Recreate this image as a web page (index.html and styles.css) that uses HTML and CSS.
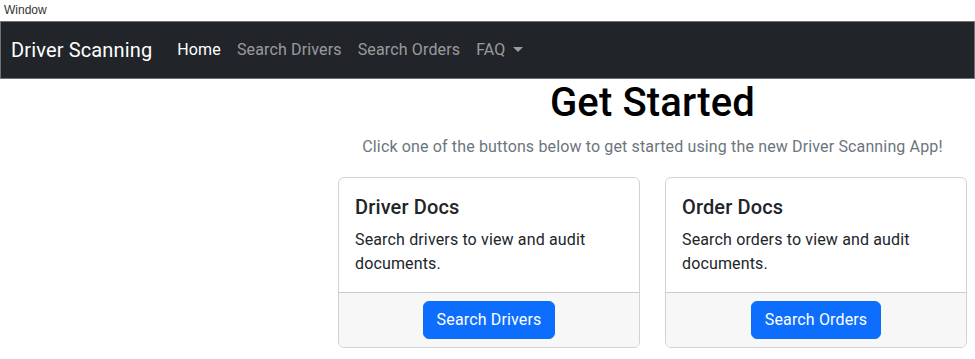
FILE: index.html
```html
<!DOCTYPE html>
<html lang="en">
<head>
<meta charset="utf-8">
<title>Driver Scanning</title>
<link rel="stylesheet" href="styles.css">
</head>
<body>
<div class="window-bar">Window</div>
<nav class="navbar">
  <a class="brand" href="#">Driver Scanning</a>
  <ul class="nav">
    <li><a class="nav-link active" href="#">Home</a></li>
    <li><a class="nav-link" href="#">Search Drivers</a></li>
    <li><a class="nav-link" href="#">Search Orders</a></li>
    <li><a class="nav-link dropdown" href="#">FAQ<span class="caret"></span></a></li>
  </ul>
</nav>
<main class="main">
  <div class="spacer"></div>
  <section class="content">
    <h1 class="title">Get Started</h1>
    <p class="lead">Click one of the buttons below to get started using the new Driver Scanning App!</p>
    <div class="cards">
      <div class="card">
        <div class="card-body">
          <h5 class="card-title">Driver Docs</h5>
          <p class="card-text">Search drivers to view and audit documents.</p>
        </div>
        <div class="card-footer"><a class="btn" href="#">Search Drivers</a></div>
      </div>
      <div class="card">
        <div class="card-body">
          <h5 class="card-title">Order Docs</h5>
          <p class="card-text">Search orders to view and audit documents.</p>
        </div>
        <div class="card-footer"><a class="btn" href="#">Search Orders</a></div>
      </div>
    </div>
  </section>
</main>
</body>
</html>
```
FILE: styles.css
```css
* { box-sizing: border-box; }
html, body { margin: 0; padding: 0; }
body {
  font-family: Roboto, "Liberation Sans", sans-serif;
  font-size: 16px;
  line-height: 1.5;
  letter-spacing: 0.009em;
  color: #212529;
  background: #fff;
}
.window-bar {
  height: 21px;
  padding-left: 4px;
  font-family: "Liberation Sans", Arial, sans-serif;
  font-size: 12px;
  line-height: 21px;
  letter-spacing: 0;
  color: #333;
}
.navbar {
  display: flex;
  align-items: center;
  background: #212529;
  border: 1px solid #6f7275;
  padding: 8px 10px;
  height: 58px;
}
.brand {
  font-size: 20px;
  line-height: 30px;
  padding: 5px 0;
  margin-right: 17px;
  color: #fff;
  text-decoration: none;
  white-space: nowrap;
}
.nav {
  display: flex;
  list-style: none;
  margin: 0;
  padding: 0;
}
.nav-link {
  display: block;
  padding: 8px 8px;
  color: rgba(255,255,255,0.55);
  text-decoration: none;
  white-space: nowrap;
}
.nav-link.active { color: #fff; }
.caret {
  display: inline-block;
  margin-left: 8px;
  vertical-align: 3px;
  border-top: 5px solid currentColor;
  border-left: 5px solid transparent;
  border-right: 5px solid transparent;
}
.main {
  display: grid;
  grid-template-columns: 330px 1fr;
  padding: 0 8px;
}
.content { text-align: center; }
.title {
  margin: 0 0 8px;
  font-size: 40px;
  font-weight: 500;
  line-height: 1.2;
  color: #000;
}
.lead {
  margin: 0 0 18px;
  color: #6c757d;
}
.cards {
  display: grid;
  grid-template-columns: 302px 302px;
  column-gap: 25px;
  text-align: left;
}
.card {
  display: flex;
  flex-direction: column;
  border: 1px solid rgba(0,0,0,0.175);
  border-radius: 6px;
  overflow: hidden;
}
.card-body { padding: 17px 16px 16px; }
.card-title {
  margin: 0 0 9px;
  font-size: 20px;
  font-weight: 500;
  line-height: 1.2;
}
.card-text { margin: 0; }
.card-footer {
  background: #f7f7f7;
  border-top: 1px solid rgba(0,0,0,0.175);
  padding: 8px 16px;
  text-align: center;
}
.btn {
  display: inline-block;
  padding: 6px 13px;
  border: 1px solid #0d6efd;
  border-radius: 6px;
  background: #0d6efd;
  color: #fff;
  text-decoration: none;
  line-height: 24px;
}
```
